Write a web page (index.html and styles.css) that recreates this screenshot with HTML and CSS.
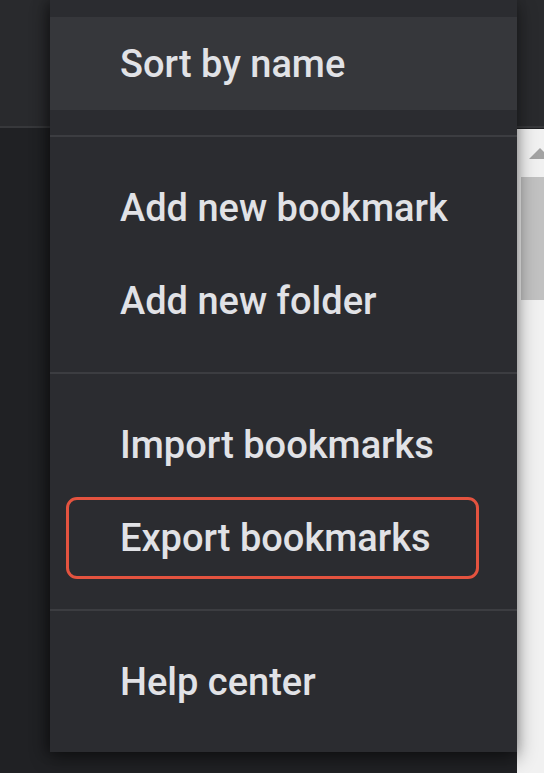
FILE: index.html
```html
<!DOCTYPE html>
<html lang="en">
<head>
    <meta charset="UTF-8">
    <meta name="viewport" content="width=device-width, initial-scale=1.0">
    <title>Bookmarks - Organize menu</title>
    <link rel="stylesheet" href="styles.css">
</head>
<body>
    <div class="page">
        <div class="toolbar"></div>
        <div class="content">
            <div class="list"></div>
            <div class="scrollbar">
                <div class="scroll-arrow"></div>
                <div class="scroll-thumb"></div>
            </div>
        </div>

        <!-- menu desplegable "Organize" -->
        <div class="menu">
            <div class="menu-item active">Sort by name</div>
            <div class="menu-sep"></div>
            <div class="menu-item">Add new bookmark</div>
            <div class="menu-item">Add new folder</div>
            <div class="menu-sep"></div>
            <div class="menu-item">Import bookmarks</div>
            <div class="menu-item marked">Export bookmarks</div>
            <div class="menu-sep"></div>
            <div class="menu-item">Help center</div>
        </div>
    </div>
</body>
</html>
```

FILE: styles.css
```css
html, body {
    margin: 0;
    height: 100%;
}
body {
    background-color: #1f2023;
    font-family: Roboto, "Liberation Sans", Arial, sans-serif;
    overflow: hidden;
}
.page {
    position: relative;
    display: flex;
    flex-direction: column;
    height: 100%;
}
.toolbar {
    height: 126px;
    flex-shrink: 0;
    background-color: #292a2d;
    border-bottom: 2px solid #37383b;
}
.content {
    flex: 1;
    display: flex;
}
.list {
    flex: 1;
    background-color: #202124;
}
.scrollbar {
    width: 27px;
    margin-top: 1px;
    background-color: #f1f1f1;
    display: flex;
    flex-direction: column;
}
.scroll-arrow {
    height: 48px;
    position: relative;
}
.scroll-arrow::before {
    content: "";
    position: absolute;
    top: 19px;
    left: 12px;
    border-left: 11px solid transparent;
    border-right: 11px solid transparent;
    border-bottom: 11px solid #a3a3a3;
}
.scroll-thumb {
    height: 123px;
    margin-left: 4px;
    background-color: #c1c1c1;
}

/* menu */
.menu {
    position: absolute;
    top: 0;
    left: 50px;
    width: 467px;
    padding: 17px 0 24px;
    background-color: #2b2c30;
    box-shadow: 0 6px 18px rgba(0, 0, 0, 0.45), -4px 0 12px rgba(0, 0, 0, 0.3);
}
.menu-item {
    position: relative;
    height: 93px;
    display: flex;
    align-items: center;
    padding-left: 70px;
    font-size: 38px;
    font-weight: 500;
    color: #e1e2e6;
}
.menu-item.active {
    background-color: #36373b;
}
.menu-sep {
    height: 2px;
    margin: 25px 0 24px;
    background-color: #3c3d41;
}
.menu-item.marked::after {
    content: "";
    position: absolute;
    top: 6px;
    bottom: 5px;
    left: 16px;
    right: 38px;
    border: 3px solid #e4533f;
    border-radius: 11px;
}
```
